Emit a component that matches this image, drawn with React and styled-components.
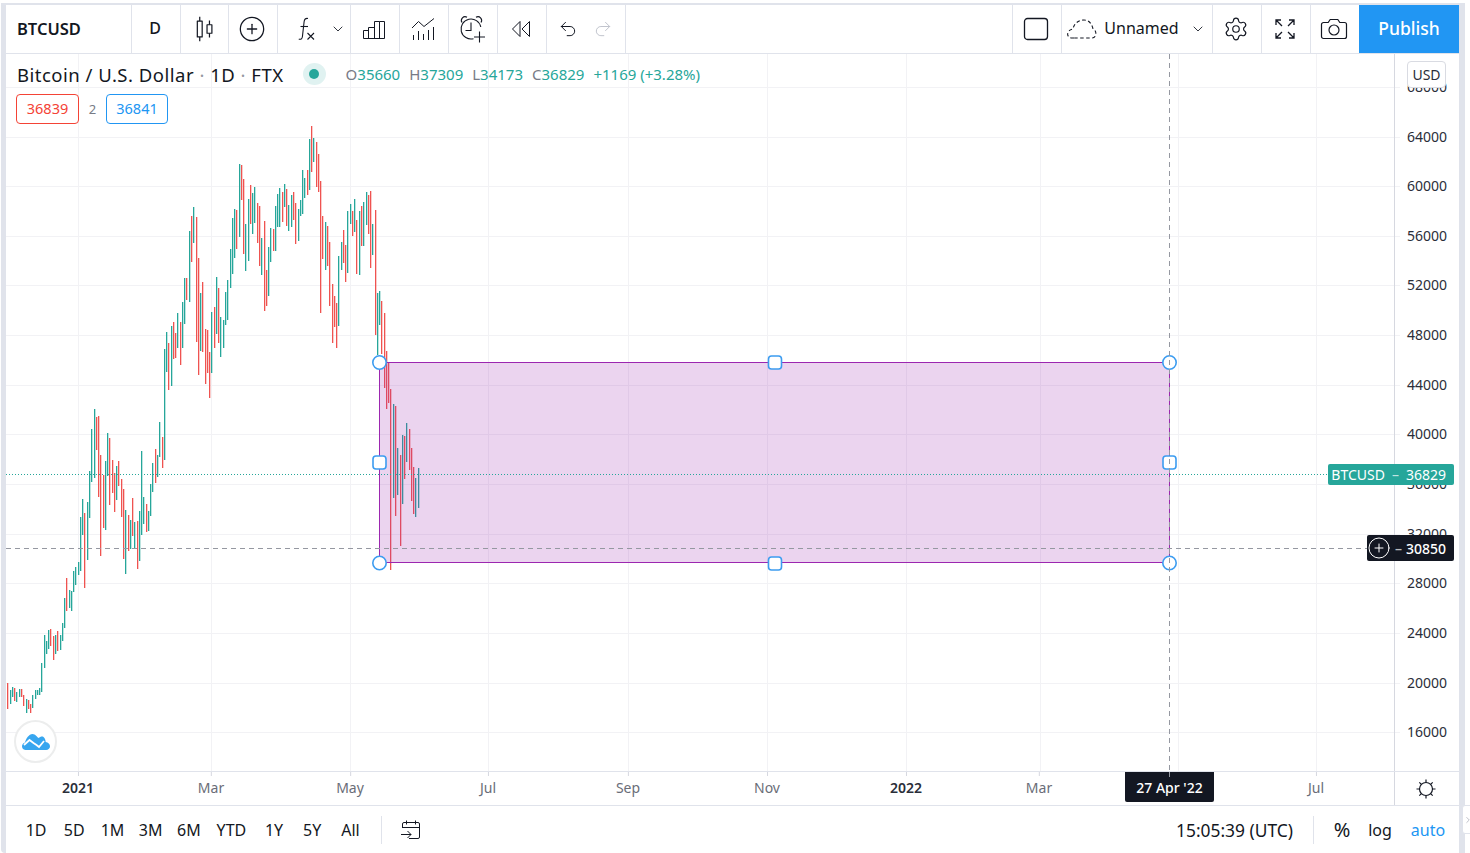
import React from 'react'
import styled, { createGlobalStyle } from 'styled-components'
import { Settings, Undo2, Redo2, ChevronDown, ChevronRight, CirclePlus } from 'lucide-react'

const GlobalStyle = createGlobalStyle`
  html, body { margin: 0; padding: 0; background: #fff; }
  body { font-family: "Noto Sans", "Open Sans", sans-serif; color: #131722; }
`

const INK = '#131722'
const LINE = '#e0e3eb'
const GRID = '#f2f2f5'
const UP = '#26a69a'
const DOWN = '#ef5350'

// x, top, bottom, direction - read off the chart in page pixels
const bars = [
  [7,683,709,'r'],[10,690,704,'g'],[12,687,697,'g'],[14,688,701,'r'],[16,692,702,'g'],[19,689,697,'g'],[21,689,697,'r'],[23,695,706,'r'],
  [26,699,713,'g'],[28,700,709,'r'],[30,704,713,'r'],[32,695,708,'g'],[35,690,699,'g'],[37,690,695,'g'],[39,688,695,'g'],[41,663,692,'g'],
  [44,635,668,'g'],[46,641,654,'g'],[48,630,649,'g'],[50,629,646,'r'],[53,636,660,'r'],[55,635,654,'g'],[57,631,651,'r'],[60,635,650,'g'],
  [62,623,641,'g'],[64,598,628,'g'],[66,578,611,'r'],[69,590,608,'g'],[71,591,611,'g'],[73,571,592,'g'],[75,567,585,'g'],[78,562,575,'g'],
  [80,517,571,'g'],[82,499,535,'g'],[84,513,588,'r'],[87,502,560,'g'],[89,471,518,'g'],[91,429,482,'g'],[94,409,478,'g'],[96,417,450,'r'],
  [98,416,497,'r'],[100,455,556,'r'],[103,475,528,'r'],[105,461,530,'g'],[107,433,476,'g'],[109,438,505,'r'],[112,460,493,'r'],[114,473,512,'r'],
  [116,466,500,'g'],[118,461,486,'r'],[121,479,517,'r'],[123,489,559,'r'],[125,510,574,'g'],[128,515,551,'r'],[130,520,549,'g'],[132,498,536,'r'],
  [134,522,549,'g'],[137,521,569,'r'],[139,511,561,'g'],[141,451,535,'g'],[143,497,524,'g'],[146,504,532,'r'],[148,511,531,'g'],[150,484,516,'g'],
  [152,463,492,'g'],[155,449,483,'r'],[157,455,477,'g'],[159,422,457,'g'],[162,437,468,'r'],[164,349,460,'g'],[166,332,372,'g'],[168,343,390,'r'],
  [171,326,386,'g'],[173,322,359,'r'],[175,333,358,'r'],[177,313,348,'g'],[180,322,365,'r'],[182,302,348,'g'],[184,278,324,'g'],[186,278,300,'r'],
  [189,231,302,'g'],[191,216,262,'r'],[193,207,243,'g'],[196,217,342,'r'],[198,258,375,'r'],[200,293,351,'g'],[202,282,352,'r'],[205,329,384,'r'],
  [207,330,373,'r'],[209,352,398,'r'],[211,312,373,'g'],[214,307,348,'r'],[216,277,334,'g'],[218,288,343,'r'],[220,317,357,'g'],[223,320,348,'g'],
  [225,292,325,'g'],[227,280,320,'g'],[230,249,288,'g'],[232,218,274,'g'],[234,209,258,'g'],[236,210,249,'r'],[239,164,237,'g'],[241,165,200,'r'],
  [243,179,254,'r'],[245,224,271,'g'],[248,199,261,'g'],[250,185,224,'r'],[252,193,234,'g'],[254,187,223,'g'],[257,203,243,'r'],[259,206,266,'r'],
  [261,238,275,'g'],[264,221,311,'r'],[266,270,306,'r'],[268,247,296,'g'],[270,228,262,'g'],[273,229,251,'r'],[275,206,251,'g'],[277,194,227,'g'],
  [279,188,227,'g'],[282,192,222,'r'],[284,184,207,'g'],[286,189,226,'r'],[288,205,231,'g'],[291,195,227,'g'],[293,192,220,'r'],[295,203,244,'r'],
  [298,209,241,'g'],[300,200,216,'g'],[302,170,214,'g'],[304,178,198,'g'],[307,170,195,'r'],[309,139,190,'g'],[311,126,172,'r'],[313,138,162,'g'],
  [316,142,187,'r'],[318,154,192,'r'],[320,181,313,'r'],[322,216,259,'r'],[325,222,270,'g'],[327,226,266,'r'],[329,242,306,'r'],[332,284,343,'r'],
  [334,296,327,'r'],[336,303,348,'r'],[338,256,326,'g'],[341,242,270,'g'],[343,230,263,'r'],[345,245,282,'r'],[347,211,273,'g'],[350,204,224,'g'],
  [352,211,236,'r'],[354,199,232,'g'],[356,220,274,'r'],[359,211,275,'g'],[361,206,246,'r'],[363,202,246,'g'],[366,192,225,'g'],[368,195,234,'r'],
  [370,191,268,'r'],[372,224,255,'g'],[375,210,335,'r'],[377,293,355,'g'],[379,291,325,'g'],[381,301,354,'r'],[384,313,388,'r'],[386,351,409,'r'],
  [388,363,403,'r'],[390,389,570,'r'],[393,404,498,'g'],[395,406,516,'r'],[397,448,495,'g'],[400,455,546,'r'],[402,435,504,'g'],[404,436,479,'r'],
  [406,423,462,'g'],[409,429,470,'r'],[411,448,501,'r'],[413,467,514,'r'],[415,478,517,'g'],[418,468,508,'g'],
]

const prices = [68000, 64000, 60000, 56000, 52000, 48000, 44000, 40000, 36000, 32000, 28000, 24000, 20000, 16000]
const priceY = (p) => 136.5 + (64000 - p) * 0.012415

const timeTicks = [
  { x: 78, label: '2021', strong: true },
  { x: 211, label: 'Mar' },
  { x: 350, label: 'May' },
  { x: 488, label: 'Jul' },
  { x: 628, label: 'Sep' },
  { x: 767, label: 'Nov' },
  { x: 906, label: '2022', strong: true },
  { x: 1039, label: 'Mar' },
  { x: 1316, label: 'Jul' },
]
const gridX = [78, 211, 350, 488, 628, 767, 906, 1040, 1178, 1316]

const ranges = ['1D', '5D', '1M', '3M', '6M', 'YTD', '1Y', '5Y', 'All']

const Page = styled.div`
  width: 1470px;
  height: 853px;
  padding-top: 3px;
  box-sizing: border-box;
  overflow: hidden;
  position: relative;
`

const Frame = styled.div`
  width: 1464px;
  height: 850px;
  margin-left: 1px;
  padding: 2px 6px 0 5px;
  box-sizing: border-box;
  background: ${LINE};
  border-bottom-left-radius: 4px;
`

const Inner = styled.div`
  height: 848px;
  background: #fff;
  display: flex;
  flex-direction: column;
`

const Toolbar = styled.div`
  height: 49px;
  flex: none;
  display: flex;
  border-bottom: 1px solid ${LINE};
  box-sizing: border-box;
`

const Cell = styled.div`
  width: ${(p) => p.$w}px;
  flex: none;
  box-sizing: border-box;
  display: flex;
  align-items: center;
  justify-content: center;
  padding-right: 2px;
  border-right: 1px solid ${(p) => (p.$last ? 'transparent' : LINE)};
  color: ${INK};
`

const SymbolCell = styled(Cell)`
  justify-content: flex-start;
  padding: 0 0 2px 11px;
  font-size: 16.5px;
  font-weight: 600;
`

const Interval = styled(Cell)`
  font-size: 16px;
  font-weight: 500;
  padding-bottom: 2px;
`

const Spacer = styled.div`
  flex: 1;
`

const RightEnd = styled.div`
  width: ${(p) => p.$w}px;
  flex: none;
`

const LeftEdge = styled(Cell)`
  width: 1px;
  padding: 0;
`

const FxChevron = styled(ChevronDown)`
  margin: 0 -10px 0 11px;
`

const RedoIcon = styled(Redo2)`
  margin-left: 15px;
  color: #c1c4cd;
`

const LayoutName = styled.span`
  font-size: 16px;
  margin: 0 11px 2px 6px;
`

const Publish = styled.button`
  width: 100px;
  flex: none;
  border: 0;
  margin: 0;
  padding: 0 0 2px;
  background: #2196f3;
  color: #fff;
  font-family: inherit;
  font-size: 17.5px;
  font-weight: 500;
`

const ChartRow = styled.div`
  height: 717px;
  flex: none;
  display: flex;
  position: relative;
  overflow: hidden;
`

const ChartPane = styled.div`
  flex: 1;
`

const PriceAxis = styled.div`
  width: 65px;
  flex: none;
  position: relative;
  border-left: 1px solid #d6d8e0;
  box-sizing: border-box;
`

const ChartSvg = styled.svg`
  position: absolute;
  left: 0;
  top: 0;
`

const PriceLabel = styled.span.attrs((p) => ({ style: { top: `${p.$y}px` } }))`
  position: absolute;
  right: 12px;
  transform: translateY(-50%);
  font-size: 14px;
  line-height: 16px;
  color: #2a2e39;
`

const Legend = styled.div`
  position: absolute;
  left: 11px;
  top: 7px;
  display: flex;
  align-items: center;
  height: 26px;
`

const LegendTitle = styled.span`
  font-size: 18.5px;
  letter-spacing: 0.5px;
  white-space: pre;
  color: ${INK};
`

const Faint = styled.span`
  color: #9598a1;
`

const StatusDot = styled.span`
  width: 23px;
  height: 22px;
  border-radius: 50%;
  background: #e0f2f1;
  margin: 0 20px 0 19px;
  display: flex;
  align-items: center;
  justify-content: center;
  &::after {
    content: '';
    width: 10px;
    height: 10px;
    border-radius: 50%;
    background: ${UP};
  }
`

const Ohlc = styled.div`
  display: flex;
  gap: 9px;
  font-size: 15px;
  color: ${UP};
`

const OhlcKey = styled.span`
  color: #787b86;
`

const Trade = styled.div`
  position: absolute;
  left: 10px;
  top: 40px;
  display: flex;
  align-items: center;
`

const TradeBox = styled.div`
  width: ${(p) => p.$w}px;
  height: 30px;
  box-sizing: border-box;
  border: 1px solid ${(p) => p.$color};
  border-radius: 4px;
  color: ${(p) => p.$color};
  background: #fff;
  font-size: 14.5px;
  padding-bottom: 2px;
  display: flex;
  align-items: center;
  justify-content: center;
`

const Spread = styled.span`
  width: 27px;
  text-align: center;
  font-size: 13px;
  color: #787b86;
`

const CurrencyButton = styled.div`
  position: absolute;
  right: 13px;
  top: 7px;
  width: 39px;
  height: 27px;
  box-sizing: border-box;
  background: #fff;
  border: 1px solid #d9dbe2;
  border-radius: 4px;
  font-size: 14px;
  display: flex;
  align-items: center;
  justify-content: center;
  color: #2a2e39;
`

const Tag = styled.div`
  position: absolute;
  right: 5px;
  display: flex;
  align-items: center;
  justify-content: flex-end;
  box-sizing: border-box;
  padding-right: 8px;
  border-radius: 2px;
  color: #fff;
  font-size: 14px;
  white-space: pre;
`

const LastPriceTag = styled(Tag)`
  top: 410px;
  width: 126px;
  height: 21px;
  background: ${UP};
`

const CrosshairTag = styled(Tag)`
  top: 481px;
  width: 87px;
  height: 26px;
  background: ${INK};
  font-weight: 500;
  svg {
    flex: none;
  }
`

const Dash = styled.span`
  margin: 0 ${(p) => p.$gap}px;
  opacity: 0.7;
`

const Logo = styled.div`
  position: absolute;
  left: 8px;
  top: 666px;
  width: 43px;
  height: 43px;
  box-sizing: border-box;
  border: 2px solid #eceded;
  border-radius: 50%;
  background: #fff;
  display: flex;
  align-items: center;
  justify-content: center;
`

const TimeRow = styled.div`
  height: 35px;
  flex: none;
  display: flex;
  position: relative;
  border-top: 1px solid ${LINE};
  border-bottom: 1px solid ${LINE};
  box-sizing: border-box;
`

const TimeAxis = styled.div`
  flex: 1;
`

const TimeCorner = styled.div`
  width: 65px;
  flex: none;
  box-sizing: border-box;
  border-left: 1px solid #d6d8e0;
  display: flex;
  align-items: center;
  justify-content: center;
  padding-right: 2px;
  color: ${INK};
`

const TimeLabel = styled.span.attrs((p) => ({ style: { left: `${p.$x}px` } }))`
  position: absolute;
  top: 7px;
  transform: translateX(-50%);
  font-size: 14px;
  line-height: 18px;
  font-weight: ${(p) => (p.$strong ? 600 : 400)};
  color: ${(p) => (p.$strong ? '#2a2e39' : '#6a6d78')};
  &::before {
    content: '';
    position: absolute;
    left: 50%;
    top: -7px;
    width: 1px;
    height: 4px;
    background: #d6d8e0;
  }
`

const DateTag = styled.div`
  position: absolute;
  left: 1119px;
  top: 0;
  width: 89px;
  height: 30px;
  background: ${INK};
  border-radius: 0 0 2px 2px;
  color: #fff;
  font-size: 14px;
  font-weight: 500;
  display: flex;
  align-items: center;
  justify-content: center;
  &::before {
    content: '';
    position: absolute;
    left: 44px;
    top: 0;
    width: 1px;
    height: 5px;
    background: #9598a1;
  }
`

const BottomBar = styled.div`
  flex: 1;
  display: flex;
  align-items: center;
  position: relative;
  font-size: 16px;
  color: ${INK};
`

const Ranges = styled.div`
  display: flex;
  margin-left: 11px;
`

const RangeButton = styled.span`
  width: ${(p) => p.$w}px;
  text-align: center;
`

const Divider = styled.div`
  width: 1px;
  height: 28px;
  background: ${LINE};
  margin: ${(p) => p.$margin};
  flex: none;
`

const Clock = styled.span`
  white-space: pre;
  font-size: 17.4px;
`

const Option = styled.span`
  width: ${(p) => p.$w}px;
  text-align: center;
  font-size: ${(p) => p.$size || 16}px;
  color: ${(p) => p.$color || INK};
`

const SideToggle = styled.div`
  position: absolute;
  left: 1462px;
  top: 805px;
  width: 12px;
  height: 29px;
  box-sizing: border-box;
  border: 1px solid ${LINE};
  border-radius: 3px;
  background: #fff;
  display: flex;
  align-items: center;
  color: #b2b5be;
`

const CandlesIcon = () => (
  <svg width="34" height="34" viewBox="0 0 28 28" fill="currentColor">
    <path d="M17 11v6h3v-6h-3zm-.5-1h4a.5.5 0 0 1 .5.5v7a.5.5 0 0 1-.5.5h-4a.5.5 0 0 1-.5-.5v-7a.5.5 0 0 1 .5-.5z" />
    <path d="M18 7h1v3.5h-1zm0 10.5h1V21h-1z" />
    <path d="M9 8v12h3V8H9zm-.5-1h4a.5.5 0 0 1 .5.5v13a.5.5 0 0 1-.5.5h-4a.5.5 0 0 1-.5-.5v-13a.5.5 0 0 1 .5-.5z" />
    <path d="M10 4h1v3.5h-1zm0 16.5h1V24h-1z" />
  </svg>
)

const FxIcon = () => (
  <svg width="28" height="28" viewBox="0 0 28 28" fill="none" stroke="currentColor" strokeWidth="1.1">
    <path d="M17 3.500c-2.500-.5-3.600.8-3.900 3.200l-1.700 15c-.3 2.200-1.600 3-3.600 2.400" />
    <path d="M9.500 11.500h7.500" />
    <path d="M16.500 18l6.500 6.500M23 18l-6.500 6.500" />
  </svg>
)

const ColumnsIcon = () => (
  <svg width="28" height="28" viewBox="0 0 28 28" fill="none" stroke="currentColor">
    <path d="M3.500 23.500h21" />
    <path d="M3.500 23.500v-8h5v8M8.500 23.500v-11h6v11M14.500 23.500V6.500h5v17M19.500 6.500h5v17" />
  </svg>
)

const IndicatorsIcon = () => (
  <svg width="28" height="28" viewBox="0 0 28 28" fill="none" stroke="currentColor">
    <path d="M3 13l6.500-6.500 5.500 5L25 3.500" />
    <path d="M4.500 25v-5M9.500 25v-9M14.500 25v-6M19.500 25V15M24.500 25V12" />
  </svg>
)

const AlarmIcon = () => (
  <svg width="30" height="30" viewBox="0 0 30 30" fill="none" stroke="currentColor" strokeWidth="1.1">
    <path d="M16.500 24.700A10 10 0 1 1 23.800 13" />
    <path d="M14 8.500v8H8.500" />
    <path d="M5 8.500a3.700 3.700 0 0 1 5-5.200M19 3.300a3.700 3.700 0 0 1 5 5.200" />
    <path d="M22.500 17.500v11M17 23h11" />
  </svg>
)

const RewindIcon = () => (
  <svg width="22" height="22" viewBox="0 0 22 22" fill="none" stroke="currentColor" strokeLinejoin="round">
    <path d="M10 3.500L2.500 11l7.500 7.500z" />
    <path d="M19.500 3.500L12 11l7.500 7.500z" />
  </svg>
)

const SquareIcon = () => (
  <svg width="26" height="24" viewBox="0 0 26 24" fill="none" stroke={INK} strokeWidth="1.300">
    <rect x="1.500" y="1.500" width="23" height="21" rx="3" />
  </svg>
)

const CloudIcon = () => (
  <svg width="32" height="22" viewBox="0 0 32 22" fill="none" stroke={INK} strokeWidth="1.100" strokeDasharray="3.500 2.500">
    <path d="M8 20H6c-6 0-6-8 1-9 1-6 6-9 11-9s8 4 9 9c4 1 4 9-1 9z" />
  </svg>
)

const FullscreenIcon = () => (
  <svg width="24" height="24" viewBox="0 0 24 24" fill="none" stroke="currentColor" strokeWidth="1.300">
    <path d="M3 8V3h5M3 3l6 6M16 3h5v5M21 3l-6 6M3 16v5h5M3 21l6-6M21 16v5h-5M21 21l-6-6" />
  </svg>
)

const CameraIcon = () => (
  <svg width="28" height="24" viewBox="0 0 28 24" fill="none" stroke="currentColor" strokeWidth="1.200">
    <path d="M3.500 5.500h4.700l2-3h7.600l2 3h4.700a2 2 0 0 1 2 2v12a2 2 0 0 1-2 2h-21a2 2 0 0 1-2-2v-12a2 2 0 0 1 2-2z" />
    <circle cx="14" cy="13" r="5" />
  </svg>
)

const CalendarIcon = () => (
  <svg width="22" height="22" viewBox="0 0 22 22" fill="none" stroke="currentColor">
    <path d="M2.500 9V5a1.500 1.500 0 0 1 1.500-1.500h14A1.500 1.500 0 0 1 19.500 5v13a1.500 1.500 0 0 1-1.500 1.500H9" />
    <path d="M2.500 8.500h17M6.500 1.500v4M15.500 1.500v4" />
    <path d="M1 15.500h10M7.500 12l3.500 3.500L7.500 19" />
  </svg>
)

const SunIcon = () => (
  <svg width="22" height="22" viewBox="0 0 22 22" fill="none" stroke="currentColor" strokeWidth="1.200">
    <circle cx="11" cy="11" r="6.500" />
    <path d="M11 1.500v3M11 17.500v3M1.500 11h3M17.500 11h3M4.300 4.300l2.100 2.100M15.600 15.600l2.100 2.100M4.300 17.700l2.100-2.100M15.600 6.400l2.100-2.100" />
  </svg>
)

const CloudLogo = () => (
  <svg width="28" height="17" viewBox="0 0 28 17">
    <path fill="#37a6ef" d="M3.500 17C1 17 0 15 0 13.300c0-2 1.500-3.500 3-3.800C4 5.500 7 1 10.500 1c3 0 4.500 3 6 4 1.500-1 3.500-2 5-1 1.500 1 2 3 2.200 5 2.500.5 4.300 2.200 4.300 4.300 0 2-1.500 3.700-4 3.700z" />
    <path fill="none" stroke="#fff" strokeWidth="1.800" d="M2 12l5.500-5 4 3 3 2 2.500 2 5-6" />
  </svg>
)

const Handle = ({ x, y, round }) =>
  round ? (
    <circle cx={x} cy={y} r="6.700" fill="#fff" stroke="#3c9cf0" strokeWidth="1.600" />
  ) : (
    <rect x={x - 6.500} y={y - 6.500} width="13" height="13" rx="3" fill="#fff" stroke="#3c9cf0" strokeWidth="1.600" />
  )

function Chart() {
  return (
    <ChartSvg width="1453" height="717" viewBox="6 54 1453 717">
      {gridX.map((x) => (
        <line key={x} x1={x + 0.5} x2={x + 0.5} y1="54" y2="771" stroke={GRID} />
      ))}
      {prices.map((p) => (
        <line key={p} x1="6" x2="1400" y1={Math.round(priceY(p)) + 0.5} y2={Math.round(priceY(p)) + 0.5} stroke={GRID} />
      ))}
      {bars.map(([x, top, bottom, dir]) => (
        <rect key={x} x={x} y={top} width="1.300" height={bottom - top} fill={dir === 'g' ? UP : DOWN} />
      ))}
      <rect x="379.500" y="362.500" width="790" height="200" fill="rgba(156,39,176,0.2)" stroke="#9c27b0" />
      <Handle x={379.5} y={362.5} round />
      <Handle x={775} y={362.5} />
      <Handle x={1169.5} y={362.5} round />
      <Handle x={379.5} y={462.5} />
      <Handle x={1169.5} y={462.5} />
      <Handle x={379.5} y={563} round />
      <Handle x={775} y={563.5} />
      <Handle x={1169.5} y={563} round />
      <line x1="6" x2="1330" y1="474.500" y2="474.500" stroke={UP} strokeDasharray="1 2" />
      <line x1="6" x2="1370" y1="548.500" y2="548.500" stroke="#9598a1" strokeDasharray="5 4" />
      <line x1="1169.500" x2="1169.500" y1="54" y2="771" stroke="#9598a1" strokeDasharray="5 4" />
    </ChartSvg>
  )
}

export default function App() {
  return (
    <Page>
      <GlobalStyle />
      <Frame>
        <Inner>
          <Toolbar>
            <SymbolCell $w={126}>BTCUSD</SymbolCell>
            <Interval $w={49}>D</Interval>
            <Cell $w={48}><CandlesIcon /></Cell>
            <Cell $w={49}><CirclePlus size={28} strokeWidth={1.100} /></Cell>
            <Cell $w={73}>
              <FxIcon />
              <FxChevron size={16} strokeWidth={1.300} />
            </Cell>
            <Cell $w={49}><ColumnsIcon /></Cell>
            <Cell $w={49}><IndicatorsIcon /></Cell>
            <Cell $w={49}><AlarmIcon /></Cell>
            <Cell $w={49}><RewindIcon /></Cell>
            <Cell $w={79}>
              <Undo2 size={20} strokeWidth={1.200} />
              <RedoIcon size={20} strokeWidth={1.200} />
            </Cell>
            <Spacer />
            <LeftEdge $w={1} />
            <Cell $w={49}><SquareIcon /></Cell>
            <Cell $w={151}>
              <CloudIcon />
              <LayoutName>Unnamed</LayoutName>
              <ChevronDown size={16} strokeWidth={1.300} />
            </Cell>
            <Cell $w={49}><Settings size={26} strokeWidth={1.100} /></Cell>
            <Cell $w={49}><FullscreenIcon /></Cell>
            <Cell $w={48} $last><CameraIcon /></Cell>
            <Publish>Publish</Publish>
          </Toolbar>

          <ChartRow>
            <Chart />
            <ChartPane />
            <PriceAxis>
              {prices.map((p) => (
                <PriceLabel key={p} $y={priceY(p) - 54}>{p}</PriceLabel>
              ))}
            </PriceAxis>
            <Legend>
              <LegendTitle>Bitcoin / U.S. Dollar <Faint>·</Faint> 1D <Faint>·</Faint> FTX</LegendTitle>
              <StatusDot />
              <Ohlc>
                <span><OhlcKey>O</OhlcKey>35660</span>
                <span><OhlcKey>H</OhlcKey>37309</span>
                <span><OhlcKey>L</OhlcKey>34173</span>
                <span><OhlcKey>C</OhlcKey>36829</span>
                <span>+1169 (+3.28%)</span>
              </Ohlc>
            </Legend>
            <Trade>
              <TradeBox $w={63} $color="#f44336">36839</TradeBox>
              <Spread>2</Spread>
              <TradeBox $w={62} $color="#2196f3">36841</TradeBox>
            </Trade>
            <CurrencyButton>USD</CurrencyButton>
            <LastPriceTag>BTCUSD<Dash $gap={7}>–</Dash>36829</LastPriceTag>
            <CrosshairTag>
              <CirclePlus size={24} strokeWidth={1} />
              <Dash $gap={4}>–</Dash>30850
            </CrosshairTag>
            <Logo><CloudLogo /></Logo>
          </ChartRow>

          <TimeRow>
            <TimeAxis>
              {timeTicks.map((t) => (
                <TimeLabel key={t.x} $x={t.x - 6} $strong={t.strong}>{t.label}</TimeLabel>
              ))}
              <DateTag>27 Apr '22</DateTag>
            </TimeAxis>
            <TimeCorner><SunIcon /></TimeCorner>
          </TimeRow>

          <BottomBar>
            <Ranges>
              {ranges.map((r) => (
                <RangeButton key={r} $w={r === 'YTD' ? 47 : 38.200}>{r}</RangeButton>
              ))}
            </Ranges>
            <Divider $margin="0 18px 0 11px" />
            <CalendarIcon />
            <Spacer />
            <Clock>15:05:39 (UTC)</Clock>
            <Divider $margin="0 9px 0 20px" />
            <Option $w={38} $size={20}>%</Option>
            <Option $w={38}>log</Option>
            <Option $w={58} $color="#2196f3">auto</Option>
            <RightEnd $w={2} />
          </BottomBar>
        </Inner>
      </Frame>
      <SideToggle><ChevronRight size={10} /></SideToggle>
    </Page>
  )
}
